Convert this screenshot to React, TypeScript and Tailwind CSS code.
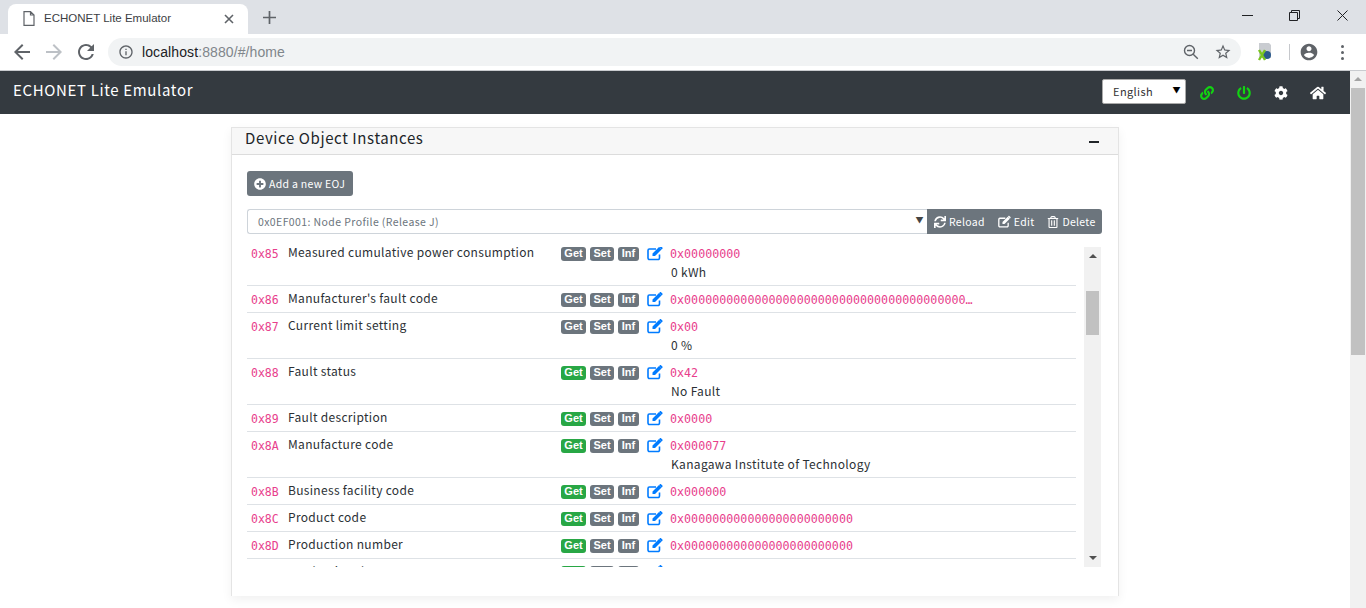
import { FaCog, FaHome, FaLink, FaPlusCircle, FaPowerOff, FaRegTrashAlt, FaSync } from 'react-icons/fa';

type Row = { code: string; name: string; get?: boolean; hex?: string; text?: string };

const ROWS: Row[] = [
  { code: '0x85', name: 'Measured cumulative power consumption', hex: '0x00000000', text: '0 kWh' },
  { code: '0x86', name: "Manufacturer's fault code", hex: '0x000000000000000000000000000000000000000000000000000000' },
  { code: '0x87', name: 'Current limit setting', hex: '0x00', text: '0 %' },
  { code: '0x88', name: 'Fault status', get: true, hex: '0x42', text: 'No Fault' },
  { code: '0x89', name: 'Fault description', get: true, hex: '0x0000' },
  { code: '0x8A', name: 'Manufacture code', get: true, hex: '0x000077', text: 'Kanagawa Institute of Technology' },
  { code: '0x8B', name: 'Business facility code', get: true, hex: '0x000000' },
  { code: '0x8C', name: 'Product code', get: true, hex: '0x000000000000000000000000' },
  { code: '0x8D', name: 'Production number', get: true, hex: '0x000000000000000000000000' },
  { code: '0x8E', name: 'Production date', get: true, hex: '0x00000000' },
];

const SANS = 'font-["Noto_Sans_CJK_JP","Noto_Sans",sans-serif]';

// fa-pencil-square-o look: outlined box, solid pencil
function EditIcon({ className }: { className?: string }) {
  return (
    <svg className={className} viewBox="0 0 16 16" fill="none">
      <path d="M12.5 9.5v3.6a1.4 1.4 0 0 1-1.4 1.4H2.4A1.4 1.4 0 0 1 1 13.1V5.4A1.4 1.4 0 0 1 2.4 4H9" stroke="currentColor" strokeWidth="1.6" />
      <path d="M5.5 8.6 12 2.1l2.5 2.5L8 11.1H5.5zM12.9 1.2c.3-.3.8-.3 1.1 0l1.4 1.4c.3.3.3.8 0 1.1l-.7.7L12.2 1.9z" fill="currentColor" />
    </svg>
  );
}

function Chip({ label, on }: { label: string; on?: boolean }) {
  return (
    <span className={`flex h-[14px] items-center justify-center rounded-[3px] font-['Liberation_Sans',sans-serif] text-[11px] font-bold text-white ${on ? 'bg-[#28a745]' : 'bg-[#6c757d]'} ${label === 'Inf' ? 'w-[21px]' : label === 'Get' ? 'w-[25px]' : 'w-[24px]'}`}>
      {label}
    </span>
  );
}

function PropRow({ row }: { row: Row }) {
  return (
    <div className="flex border-b border-[#dee2e6] pt-1 pb-[3px]">
      <span className="h-[19px] w-[41px] translate-y-px pl-1 font-['DejaVu_Sans_Mono',monospace] text-[11.5px] leading-[19px] text-[#e83e8c]">{row.code}</span>
      <span className="h-[19px] w-[273px] -translate-y-[2px] text-[12px] leading-[19px] tracking-[0.32px] text-[#2b3035]">{row.name}</span>
      <div className="flex h-[19px] w-[86px] items-center gap-1">
        <Chip label="Get" on={row.get} />
        <Chip label="Set" />
        <Chip label="Inf" />
      </div>
      <EditIcon className="mt-[1px] h-[16px] w-[16px] text-[#007bff]" />
      <div className="ml-[7px] min-w-0">
        <div className="w-[308px] translate-y-px truncate font-['DejaVu_Sans_Mono',monospace] text-[11.7px] leading-[19px] text-[#e83e8c]">{row.hex}</div>
        {row.text && <div className="-translate-y-px pl-px text-[12px] leading-[19px] tracking-[0.33px] text-[#2b3035]">{row.text}</div>}
      </div>
    </div>
  );
}

function BrowserBar() {
  return (
    <div className="h-[71px] shrink-0 font-['Liberation_Sans',sans-serif]">
      <div className="flex h-[34px] bg-[#dee1e6] pt-1 pl-2">
        <div className="flex h-[30px] w-[240px] items-center rounded-t-lg bg-white pb-px pl-[15px] pr-[14px]">
          <svg width="12" height="15" viewBox="0 0 12 15" fill="none" stroke="#5f6368" strokeWidth="1.2"><path d="M1 .6h6.5L11 4v10.4H1zM7.5.6V4H11" /></svg>
          <span className="ml-[9px] text-[11.5px] text-[#3c4043]">ECHONET Lite Emulator</span>
          <svg className="ml-auto" width="10" height="10" viewBox="0 0 10 10" stroke="#5f6368" strokeWidth="1.6"><path d="M1 1l8 8M9 1l-8 8" /></svg>
        </div>
        <svg className="mt-[7px] ml-[15px]" width="13" height="13" viewBox="0 0 13 13" stroke="#5f6368" strokeWidth="1.7"><path d="M6.5 0v13M0 6.5h13" /></svg>
        <div className="ml-auto flex h-[30px] -translate-y-1 items-center">
          <svg className="mr-[36px]" width="11" height="11" viewBox="0 0 11 11" stroke="#202124" strokeWidth="1"><path d="M0 5.5h11" /></svg>
          <svg className="mr-[37px]" width="11" height="11" viewBox="0 0 11 11" fill="none" stroke="#202124" strokeWidth="1"><path d="M.5 2.5h8v8h-8zM2.5 2.5v-2h8v8h-2" /></svg>
          <svg className="mr-[18px]" width="11" height="11" viewBox="0 0 11 11" stroke="#202124" strokeWidth="1"><path d="M.5.5l10 10M10.5.5l-10 10" /></svg>
        </div>
      </div>
      <div className="flex h-[37px] items-center border-b border-[#c9cbcf] bg-white">
        <svg className="ml-[10px]" width="24" height="24" viewBox="0 0 24 24" fill="#5f6368"><path d="M20 11H7.83l5.59-5.59L12 4l-8 8 8 8 1.41-1.41L7.83 13H20v-2z" /></svg>
        <svg className="ml-[8px]" width="24" height="24" viewBox="0 0 24 24" fill="#bdc1c6"><path d="M12 4l-1.41 1.41L16.17 11H4v2h12.17l-5.58 5.59L12 20l8-8z" /></svg>
        <svg className="ml-[8px]" width="24" height="24" viewBox="0 0 24 24" fill="#5f6368"><path d="M17.65 6.35A7.958 7.958 0 0012 4c-4.42 0-7.99 3.58-7.99 8s3.57 8 7.99 8c3.73 0 6.84-2.55 7.73-6h-2.08A5.99 5.99 0 0112 18c-3.31 0-6-2.69-6-6s2.69-6 6-6c1.66 0 3.14.69 4.22 1.78L13 11h7V4l-2.35 2.35z" /></svg>
        <div className="ml-[10px] flex h-[28px] w-[1133px] items-center rounded-full bg-[#f1f3f4] pl-[10px] pr-[9px]">
          <svg width="16" height="16" viewBox="0 0 24 24" fill="#5f6368"><path d="M11 7h2v2h-2zm0 4h2v6h-2zm1-9C6.48 2 2 6.48 2 12s4.48 10 10 10 10-4.48 10-10S17.52 2 12 2zm0 18c-4.41 0-8-3.59-8-8s3.59-8 8-8 8 3.59 8 8-3.59 8-8 8z" /></svg>
          <span className="ml-[8px] text-[14px] tracking-[0.1px] text-[#202124]">localhost<span className="text-[#80868b]">:8880/#/home</span></span>
          <svg className="ml-auto" width="18" height="18" viewBox="0 0 18 18" fill="none" stroke="#5f6368" strokeWidth="1.4"><circle cx="7.5" cy="7.5" r="5" /><path d="M5 7.5h5M11.2 11.2l4.6 4.6" /></svg>
          <svg className="ml-[14px]" width="18" height="18" viewBox="0 0 24 24" fill="#5f6368"><path d="M22 9.24l-7.19-.62L12 2 9.19 8.63 2 9.24l5.46 4.73L5.82 21 12 17.27 18.18 21l-1.63-7.03L22 9.24zM12 15.4l-3.76 2.27 1-4.28-3.32-2.88 4.38-.38L12 6.1l1.71 4.04 4.38.38-3.32 2.88 1 4.28L12 15.4z" /></svg>
        </div>
        <svg className="ml-[16px]" width="16" height="18" viewBox="0 0 16 18"><path d="M2 0h10l2 2v13H2z" fill="#c9ccd1" /><circle cx="10" cy="12" r="4" fill="#2c5a8c" /><path d="M2 7l6 10M8 7L2 17" stroke="#7ac520" strokeWidth="2.4" /></svg>
        <div className="ml-[16px] h-[16px] w-px bg-[#c6c8cc]" />
        <svg className="ml-[9px]" width="20" height="20" viewBox="0 0 24 24" fill="#5f6368"><path d="M12 2C6.48 2 2 6.48 2 12s4.48 10 10 10 10-4.48 10-10S17.52 2 12 2zm0 3c1.66 0 3 1.34 3 3s-1.34 3-3 3-3-1.34-3-3 1.34-3 3-3zm0 14.2a7.2 7.2 0 01-6-3.22c.03-1.99 4-3.08 6-3.08s5.97 1.09 6 3.08a7.2 7.2 0 01-6 3.22z" /></svg>
        <div className="ml-[22px] flex flex-col gap-[3px]">
          <span className="h-[3px] w-[3px] rounded-full bg-[#5f6368]" />
          <span className="h-[3px] w-[3px] rounded-full bg-[#5f6368]" />
          <span className="h-[3px] w-[3px] rounded-full bg-[#5f6368]" />
        </div>
      </div>
    </div>
  );
}

export default function App() {
  return (
    <div className={`flex h-[608px] flex-col overflow-hidden bg-white ${SANS}`}>
      <BrowserBar />
      <div className="flex min-h-0 flex-1">
        <div className="min-w-0 flex-1">
          <nav className="flex h-[43px] items-center bg-[#343a40] pl-[13px] pr-[24px]">
            <span className="pb-[4px] text-[15px] tracking-[0.65px] text-white">ECHONET Lite Emulator</span>
            <div className="ml-auto mb-[2px] flex h-[25px] w-[84px] items-center justify-between rounded-[2px] border border-[#aaa] bg-white pl-[10px] pr-[4px] text-[11px] tracking-[0.4px] text-[#333]">
              <span className="pb-px">English</span>
              <span className="pb-1 text-[8px] text-black">▼</span>
            </div>
            <FaLink className="ml-[14px] h-[14px] w-[14px] text-[#12d312]" />
            <FaPowerOff className="ml-[23px] h-[14px] w-[14px] text-[#12d312]" />
            <FaCog className="ml-[23px] h-[14px] w-[14px] text-white" />
            <FaHome className="ml-[22px] h-[16px] w-[16px] text-white" />
          </nav>
          <main className="mx-auto mt-[13px] h-[469px] w-[888px] border border-b-0 border-[#e4e4e4] shadow-[0_4px_10px_rgba(0,0,0,0.06)]">
            <div className="flex h-[27px] items-center justify-between border-b border-[#dcdcdc] bg-[#f7f7f7] pl-[13px] pr-[19px]">
              <h1 className="pb-[6px] text-[15px] tracking-[0.6px] text-[#212529]">Device Object Instances</h1>
              <span className="mt-[2px] h-[2px] w-[10px] bg-[#212529]" />
            </div>
            <div className="px-[15px] pt-[16px]">
              <button type="button" className="flex h-[25px] w-[106px] items-center rounded-[3px] bg-[#6c757d] pl-[7px] text-[10.5px] tracking-[0.3px] text-white">
                <FaPlusCircle className="mr-[3px] h-[12px] w-[12px]" />
                Add a new EOJ
              </button>
              <div className="mt-[13px] flex h-[25px] w-[855px]">
                <div className="flex flex-1 items-center justify-between rounded-l-[3px] border border-r-0 border-[#ced4da] pl-[10px] pr-[3px] text-[10.5px] tracking-[0.4px] text-[#6c757d]">
                  0x0EF001: Node Profile (Release J)
                  <span className="pb-1 text-[8px] text-[#444]">▼</span>
                </div>
                <div className="flex w-[175px] items-center rounded-r-[3px] bg-[#6c757d] pl-[7px] text-[10.5px] tracking-[0.3px] text-white">
                  <FaSync className="mr-[3px] h-[12px] w-[12px]" />
                  Reload
                  <EditIcon className="ml-[13px] mr-[3px] h-[13px] w-[13px]" />
                  Edit
                  <FaRegTrashAlt className="ml-[13px] mr-[3px] h-[12px] w-[12px]" />
                  Delete
                </div>
              </div>
              <div className="mt-[13px] flex h-[320px] w-[854px] justify-between">
                <div className="h-full w-[829px] overflow-hidden">
                  <div className="-mt-[7px]">
                    {ROWS.map((r) => <PropRow key={r.code} row={r} />)}
                  </div>
                </div>
                <div className="flex h-full w-[17px] flex-col items-center bg-[#f1f1f1]">
                  <span className="mt-[7px] h-0 w-0 border-x-[4px] border-b-[4px] border-x-transparent border-b-[#505050]" />
                  <span className="mt-[33px] h-[44px] w-[13px] bg-[#c1c1c1]" />
                  <span className="mt-auto mb-[7px] h-0 w-0 border-x-[4px] border-t-[4px] border-x-transparent border-t-[#505050]" />
                </div>
              </div>
            </div>
          </main>
        </div>
        <div className="flex h-full w-[16px] flex-col items-center bg-[#f1f1f1]">
          <span className="mt-[6px] h-0 w-0 border-x-[4px] border-b-[4px] border-x-transparent border-b-[#a3a3a3]" />
          <span className="mt-[7px] h-[267px] w-[14px] bg-[#c1c1c1]" />
        </div>
      </div>
    </div>
  );
}
